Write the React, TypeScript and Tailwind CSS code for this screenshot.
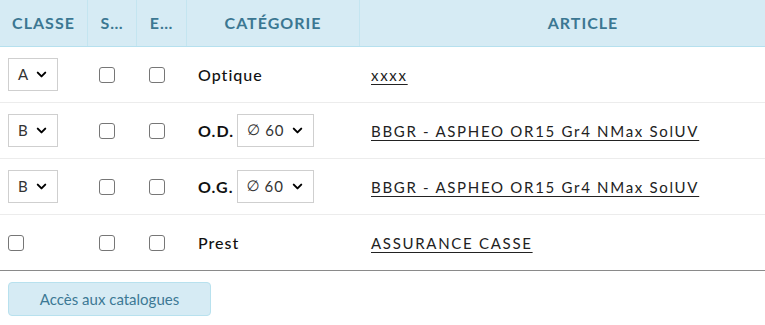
import { ChevronDown } from "lucide-react";

function Select({ value, className = "" }: { value: React.ReactNode; className?: string }) {
    return (
        <div className={`flex h-[33px] items-center justify-between border border-[#cfcfcf] bg-white pl-[9px] pr-[8px] text-[15px] text-[#333] ${className}`}>
            <span className="flex items-center">{value}</span>
            <ChevronDown size={15} strokeWidth={3.2} className="text-black" />
        </div>
    );
}

function Box() {
    return <span className="block h-[16px] w-[16px] rounded-[3px] border border-[#767676] bg-white" />;
}

const rows = [
    { cls: "A", cat: "Optique", bold: false, dia: false, article: "xxxx" },
    { cls: "B", cat: "O.D.", bold: true, dia: true, article: "BBGR - ASPHEO OR15 Gr4 NMax SolUV" },
    { cls: "B", cat: "O.G.", bold: true, dia: true, article: "BBGR - ASPHEO OR15 Gr4 NMax SolUV" },
    { cls: null, cat: "Prest", bold: false, dia: false, article: "ASSURANCE CASSE" },
];

export default function App() {
    return (
        <div className="h-[325px] w-[765px] overflow-hidden bg-white" style={{ fontFamily: "Lato, 'Noto Sans', sans-serif" }}>
            <div className="w-[806px]">
                {/* en-tête */}
                <div className="flex h-[47px] border-b border-[#b6e0ee] bg-[#d6ebf4] text-[16px] font-bold uppercase tracking-[1px] text-[#3b7792]">
                    <div className="flex w-[88px] items-center justify-center border-r border-[#c4e5f0]">Classe</div>
                    <div className="flex w-[49px] items-center justify-center border-r border-[#c4e5f0]">S…</div>
                    <div className="flex w-[50px] items-center justify-center border-r border-[#c4e5f0]">E…</div>
                    <div className="flex w-[173px] items-center justify-center border-r border-[#c4e5f0]">Catégorie</div>
                    <div className="flex flex-1 items-center justify-center">Article</div>
                </div>

                {rows.map((r, i) => (
                    <div
                        key={i}
                        className={`flex h-[56px] items-center ${i === rows.length - 1 ? "border-b border-[#8a8a8a]" : "border-b border-[#ececec]"}`}
                    >
                        <div className="w-[88px] pl-[8px]">
                            {r.cls ? <Select value={r.cls} className="w-[50px]" /> : <Box />}
                        </div>
                        <div className="w-[49px] pl-[11px]"><Box /></div>
                        <div className="w-[50px] pl-[12px]"><Box /></div>
                        <div className="flex w-[173px] items-center pl-[11px] text-[16px] tracking-[1px] text-[#111]">
                            <span className={r.bold ? "font-bold" : "font-medium"}>{r.cat}</span>
                            {r.dia && (
                                <Select
                                    value={<><span className="mr-[4px] text-[15px]" style={{ fontFamily: "'DejaVu Sans', sans-serif" }}>∅</span>60</>}
                                    className="ml-[3px] w-[77px]"
                                />
                            )}
                        </div>
                        <div className="flex-1 pl-[11px]">
                            <a className="text-[15px] tracking-[1.7px] text-[#222] underline underline-offset-[3px]">{r.article}</a>
                        </div>
                    </div>
                ))}

                <div className="pl-[8px] pt-[11px]">
                    <button className="h-[34px] w-[203px] rounded-[4px] border border-[#b8e1ee] bg-[#d6ebf4] text-[15px] text-[#3d7995]">
                        Accès aux catalogues
                    </button>
                </div>
            </div>
        </div>
    );
}
